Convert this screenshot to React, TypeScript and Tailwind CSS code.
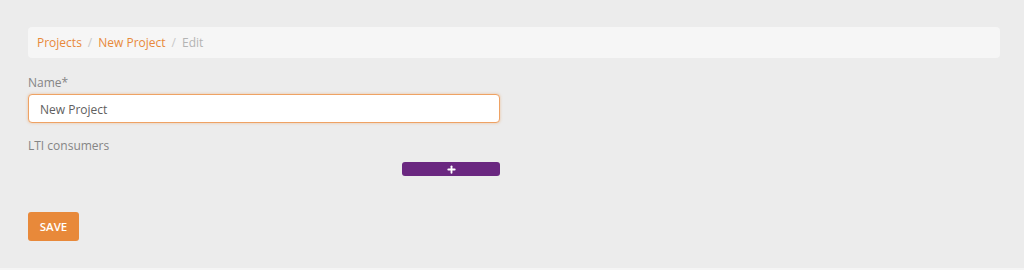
import { Plus } from "lucide-react"

const font = { fontFamily: '"Open Sans", "Liberation Sans", sans-serif' }

function Breadcrumb() {
  return (
    <div className="flex h-[31px] items-center gap-[6px] rounded-[4px] bg-[#f6f6f6] px-[9px] text-[12px] font-medium">
      <a className="text-[#e8893a]">Projects</a>
      <span className="text-[#c8c8c8]">/</span>
      <a className="text-[#e8893a]">New Project</a>
      <span className="text-[#c8c8c8]">/</span>
      <span className="text-[#b4b4b4]">Edit</span>
    </div>
  )
}

export default function App() {
  return (
    <div
      className="h-[270px] w-full border-b-2 border-[#f5f5f5] bg-[#ececec] pl-[28px] pr-[24px] pt-[27px]"
      style={font}
    >
      <Breadcrumb />

      <div className="mt-[16px] w-[472px]">
        <label className="block text-[12px] leading-[18px] text-[#858585]">Name*</label>
        <input
          defaultValue="New Project"
          className="mt-[2px] h-[29px] w-full rounded-[4px] border border-[#eea264] bg-white px-[11px] pt-[1px] text-[12px] text-[#606060] shadow-[0_0_3px_rgba(232,137,58,0.45)] outline-none"
        />

        <div className="mt-[14px] text-[12px] leading-[18px] text-[#858585]">LTI consumers</div>
        <div className="mt-[7px] flex justify-end">
          <button className="flex h-[14px] w-[98px] items-center justify-center rounded-[3px] bg-[#6a2780] text-white">
            <Plus size={11} strokeWidth={4} />
          </button>
        </div>
      </div>

      <button className="mt-[36px] h-[29px] w-[51px] rounded-[3px] bg-[#e8893a] text-[11.5px] font-semibold text-white">
        SAVE
      </button>
    </div>
  )
}
